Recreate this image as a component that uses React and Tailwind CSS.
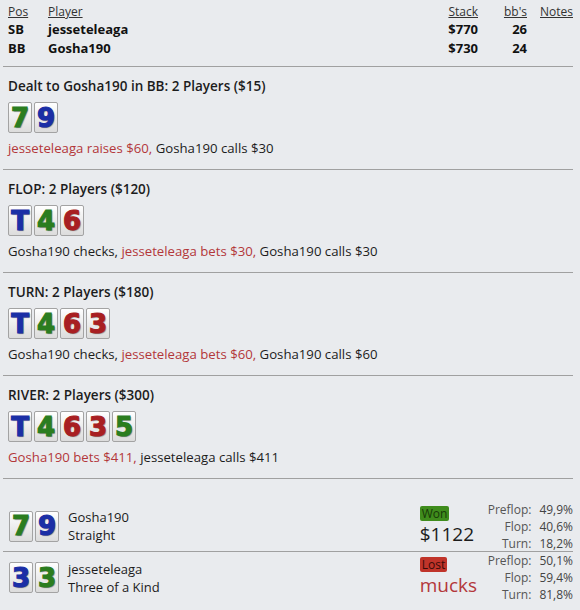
import React from 'react';

const SUIT = {
  c: 'text-[#2b7d1f]',
  d: 'text-[#1b2fa6]',
  h: 'text-[#a81f22]',
};

function Card({ rank, suit }) {
  return (
    <div
      className={`flex h-[31px] w-6 items-center justify-center overflow-hidden rounded-[2px] border border-[#a3a3a3] bg-linear-to-b from-white to-[#dcdcdc] font-['DejaVu_Sans',sans-serif] text-[26px] font-bold leading-none [-webkit-text-stroke:1.2px_currentColor] [text-shadow:1px_1px_1px_rgba(0,0,0,0.45)] ${SUIT[suit]}`}
    >
      {rank}
    </div>
  );
}

function Cards({ cards }) {
  return (
    <div className="flex gap-[2px]">
      {cards.map((c, i) => (
        <Card key={i} rank={c[0]} suit={c[1]} />
      ))}
    </div>
  );
}

const red = 'text-[#b3373a]';

function Street({ title, cards, children }) {
  return (
    <div className="border-b border-[#a0a0a0] pb-3 pt-[9px]">
      <div className="pl-[5px] text-[13.5px] font-semibold leading-5 text-[#1c1c1c]">{title}</div>
      <div className="mt-[6px] pl-[5px]">
        <Cards cards={cards} />
      </div>
      <div className="mt-[6px] pl-[5px] text-[13.2px] leading-[18px] text-[#1c1c1c]">{children}</div>
    </div>
  );
}

function Equity({ rows }) {
  return (
    <div className="grid grid-cols-[auto_auto] gap-x-2 text-[12px] leading-[17px] text-[#444]">
      {rows.map(([k, v]) => (
        <React.Fragment key={k}>
          <span className="text-right text-[#555]">{k}</span>
          <span>{v}</span>
        </React.Fragment>
      ))}
    </div>
  );
}

function Result({ cards, name, hand, badge, badgeCls, amount, amountCls, rows, divider }) {
  return (
    <div className={`flex h-[51px] items-center pl-[6px] ${divider ? 'border-b border-[#a0a0a0]' : ''}`}>
      <Cards cards={cards} />
      <div className="ml-[9px] flex-1 text-[13px] leading-[18px]">
        <div>{name}</div>
        <div>{hand}</div>
      </div>
      <div className="mr-[12px] flex w-[56px] flex-col items-start">
        <span className={`rounded-[2px] px-[2px] text-[12px] leading-[15px] ${badgeCls}`}>{badge}</span>
        <span className={`text-[19px] leading-[26px] ${amountCls}`}>{amount}</span>
      </div>
      <Equity rows={rows} />
    </div>
  );
}

export default function App() {
  return (
    <div className="min-h-[610px] w-[580px] bg-[#e9ebee] pl-[3px] pr-[7px] font-['Open_Sans',sans-serif] text-[#1c1c1c]">
      {/* players */}
      <div className="border-b border-[#a0a0a0] pb-2 pt-[3px]">
        <div className="grid grid-cols-[40px_1fr_60px_49px_46px] pl-[5px] text-[12px] leading-[17px] text-[#333]">
          <span className="underline">Pos</span>
          <span className="underline">Player</span>
          <span className="text-right underline">Stack</span>
          <span className="text-right underline">bb's</span>
          <span className="text-right underline">Notes</span>
        </div>
        {[
          ['SB', 'jesseteleaga', '$770', '26'],
          ['BB', 'Gosha190', '$730', '24'],
        ].map((r) => (
          <div
            key={r[0]}
            className="grid grid-cols-[40px_1fr_60px_49px_46px] pl-[5px] text-[13px] font-bold leading-[19px] text-[#111]"
          >
            <span>{r[0]}</span>
            <span>{r[1]}</span>
            <span className="text-right">{r[2]}</span>
            <span className="text-right">{r[3]}</span>
            <span />
          </div>
        ))}
      </div>

      <Street title="Dealt to Gosha190 in BB: 2 Players ($15)" cards={['7c', '9d']}>
        <span className={red}>jesseteleaga raises $60,</span> Gosha190 calls $30
      </Street>
      <Street title="FLOP: 2 Players ($120)" cards={['Td', '4c', '6h']}>
        Gosha190 checks, <span className={red}>jesseteleaga bets $30,</span> Gosha190 calls $30
      </Street>
      <Street title="TURN: 2 Players ($180)" cards={['Td', '4c', '6h', '3h']}>
        Gosha190 checks, <span className={red}>jesseteleaga bets $60,</span> Gosha190 calls $60
      </Street>
      <Street title="RIVER: 2 Players ($300)" cards={['Td', '4c', '6h', '3h', '5c']}>
        <span className={red}>Gosha190 bets $411,</span> jesseteleaga calls $411
      </Street>

      {/* showdown */}
      <div className="pt-[22px]">
        <Result
          divider
          cards={['7c', '9d']}
          name="Gosha190"
          hand="Straight"
          badge="Won"
          badgeCls="bg-[#3f8c1c] text-[#173a08]"
          amount="$1122"
          amountCls="text-[#1c1c1c]"
          rows={[['Preflop:', '49,9%'], ['Flop:', '40,6%'], ['Turn:', '18,2%']]}
        />
        <Result
          cards={['3d', '3c']}
          name="jesseteleaga"
          hand="Three of a Kind"
          badge="Lost"
          badgeCls="bg-[#c0342a] text-[#3a0b08]"
          amount="mucks"
          amountCls={red}
          rows={[['Preflop:', '50,1%'], ['Flop:', '59,4%'], ['Turn:', '81,8%']]}
        />
      </div>
    </div>
  );
}
